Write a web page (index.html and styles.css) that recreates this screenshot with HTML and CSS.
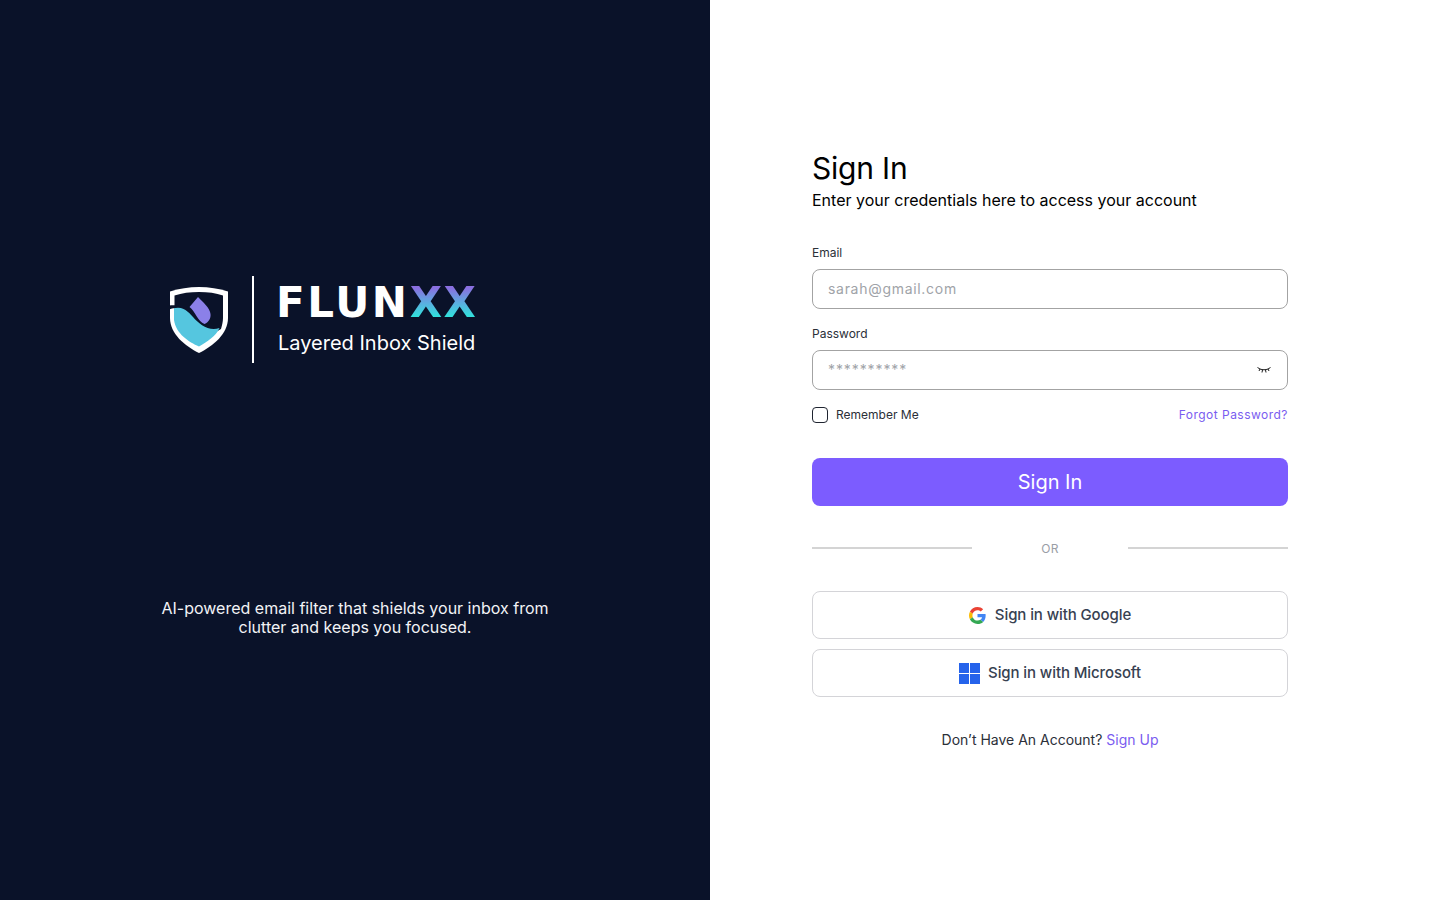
FILE: index.html
```html
<!DOCTYPE html>
<html lang="en">
<head>
    <meta charset="UTF-8">
    <title>Flunxx - Sign In</title>
    <link rel="stylesheet" href="styles.css">
</head>
<body>
    <div class="page">
        <section class="brand-panel">
            <div class="brand">
                <svg class="shield" viewBox="0 0 60 68" width="60" height="68">
                    <path d="M30 1 C40 1 50 2.500 59 5.500 V32 C59 48 44 60 30 67 C16 60 1 48 1 32 V5.500 C10 2.500 20 1 30 1 Z" fill="#fff"/>
                    <path d="M30 6 C39 6 47 7 54 9.500 V32 C54 36 53 39 52 43 L30 56 L5.500 32 V9.500 C13 7 21 6 30 6 Z" fill="#0a1229"/>
                    <path d="M5 22 C12 20 18 24 24 31 C30 38 40 46 50.500 42 C47 50 38 56 30 60.500 C20 56 7 48 5 34 Z" fill="#55c6df"/>
                    <path d="M0 19.500 C4 19 8 19 12 20.500 L12 21.500 C8 21.500 4 22 0 23.500 Z" fill="#0a1229"/>
                    <path d="M29 11 L20.500 21 C26 25 29 36 35.500 38 C40 36 42 32 41.500 28 C41 22 34 16 29 11 Z" fill="#8b80e8"/>
                </svg>
                <span class="brand-rule"></span>
                <div class="brand-text">
                    <div class="wordmark">FLUN<span class="wordmark-x">XX</span></div>
                    <div class="brand-sub">Layered Inbox Shield</div>
                </div>
            </div>
            <p class="tagline">AI-powered email filter that shields your inbox from clutter and keeps you focused.</p>
        </section>

        <main class="form-panel">
            <form class="signin">
                <h1>Sign In</h1>
                <p class="intro">Enter your credentials here to access your account</p>

                <label class="field-label" for="email">Email</label>
                <input class="text-input" id="email" type="email" placeholder="sarah@gmail.com">

                <label class="field-label second" for="password">Password</label>
                <div class="password-wrap">
                    <input class="text-input password" id="password" type="text" placeholder="**********">
                    <svg class="eye" viewBox="0 0 14 7" width="14" height="7" fill="none" stroke="#1c1c1c" stroke-width="1">
                        <path d="M0.500 0.500 L3 2 C5.500 3 8.500 3 11 2 L13.500 0.500"/>
                        <path d="M3 2 L2 4 M5.500 2.800 L5 5.500 M8.500 2.800 L9 5.500 M11 2 L12 4"/>
                    </svg>
                </div>

                <div class="options">
                    <label class="remember"><span class="checkbox"></span>Remember Me</label>
                    <a class="forgot" href="#">Forgot Password?</a>
                </div>

                <button class="submit" type="button">Sign In</button>

                <div class="divider"><span></span><em>OR</em><span></span></div>

                <button class="social google" type="button">
                    <svg viewBox="0 0 48 48" width="17" height="17">
                        <path fill="#EA4335" d="M24 9.500c3.500 0 6.700 1.300 9.100 3.500l6.800-6.800C35.800 2.400 30.200 0 24 0 14.600 0 6.500 5.400 2.600 13.200l7.900 6.100C12.400 13.600 17.700 9.500 24 9.500z"/>
                        <path fill="#4285F4" d="M47 24.500c0-1.600-.1-3.100-.4-4.500H24v9h12.900c-.6 3-2.200 5.400-4.700 7.100l7.700 6c4.500-4.200 7.100-10.300 7.100-17.600z"/>
                        <path fill="#FBBC05" d="M10.500 28.700c-.5-1.500-.8-3-.8-4.700s.3-3.200.8-4.700l-7.900-6.100C.9 16.500 0 20.100 0 24s.9 7.500 2.600 10.800l7.900-6.100z"/>
                        <path fill="#34A853" d="M24 48c6.500 0 11.900-2.100 15.900-5.900l-7.700-6c-2.100 1.400-4.900 2.300-8.200 2.300-6.300 0-11.600-4.100-13.500-9.700l-7.900 6.100C6.500 42.600 14.600 48 24 48z"/>
                    </svg>
                    Sign in with Google
                </button>
                <button class="social microsoft" type="button">
                    <svg viewBox="0 0 21 21" width="21" height="21" fill="#2563eb">
                        <rect x="0" y="0" width="10" height="10"/>
                        <rect x="11" y="0" width="10" height="10"/>
                        <rect x="0" y="11" width="10" height="10"/>
                        <rect x="11" y="11" width="10" height="10"/>
                    </svg>
                    Sign in with Microsoft
                </button>

                <p class="signup">Don’t Have An Account? <a href="#">Sign Up</a></p>
            </form>
        </main>
    </div>
</body>
</html>
```

FILE: styles.css
```css
* {
    box-sizing: border-box;
}

body {
    margin: 0;
    font-family: Inter, "Liberation Sans", sans-serif;
    background: #fff;
    color: #000;
}

.page {
    display: flex;
    height: 900px;
    overflow: hidden;
}

/* Left panel */
.brand-panel {
    width: 710px;
    background: #0a1229;
    color: #fff;
    padding-top: 276px;
    display: flex;
    flex-direction: column;
}

.brand {
    display: flex;
    align-items: center;
    margin-left: 169px;
    height: 87px;
}

.brand-rule {
    width: 2px;
    height: 87px;
    background: #fff;
    margin-left: 23px;
}

.brand-text {
    margin-left: 22px;
    margin-top: -3px;
}

.wordmark {
    font-family: "DejaVu Sans", Inter, sans-serif;
    font-size: 42px;
    line-height: 44px;
    font-weight: 700;
    letter-spacing: 2.6px;
    color: #fff;
    white-space: nowrap;
}

.wordmark-x {
    letter-spacing: 1.5px;
    background: linear-gradient(180deg, #8a6fe0 20%, #5ab0e0 52%, #2fe3dc 80%);
    -webkit-background-clip: text;
    background-clip: text;
    color: transparent;
}

.brand-sub {
    font-size: 20px;
    line-height: 24px;
    margin-top: 6px;
    margin-left: 2px;
}

.tagline {
    width: 400px;
    margin: 236px auto 0;
    text-align: center;
    font-size: 16px;
    line-height: 19px;
    color: #f2f3f6;
}

/* Right panel */
.form-panel {
    flex: 1;
    padding: 150px 152px 0 102px;
}

.signin {
    display: flex;
    flex-direction: column;
}

h1 {
    margin: 0 0 2px;
    font-size: 30px;
    line-height: 36px;
    font-weight: 400;
    letter-spacing: -0.2px;
}

.intro {
    margin: 0;
    font-size: 16px;
    line-height: 24px;
    margin-bottom: 33px;
}

.field-label {
    font-size: 12px;
    line-height: 16px;
    color: #2b2f38;
    margin-bottom: 8px;
}

.field-label.second {
    margin-top: 17px;
}

.text-input {
    width: 100%;
    height: 40px;
    padding: 0 15px 1px;
    border: 1px solid #a3a3a3;
    border-radius: 8px;
    font-family: Inter, "Liberation Sans", sans-serif;
    font-size: 14px;
    letter-spacing: 0.7px;
    outline: none;
}

.text-input.password {
    letter-spacing: 0.9px;
    padding-bottom: 2px;
}

.text-input::placeholder {
    color: #a0a3a8;
    opacity: 1;
}

.password-wrap {
    position: relative;
}

.eye {
    position: absolute;
    top: 17px;
    right: 17px;
}

.options {
    display: flex;
    justify-content: space-between;
    align-items: center;
    margin-top: 17px;
    font-size: 12px;
    line-height: 16px;
}

.remember {
    display: flex;
    align-items: center;
    gap: 8px;
    color: #2b2f38;
}

.checkbox {
    width: 16px;
    height: 16px;
    border: 1px solid #1f2430;
    border-radius: 4px;
}

.forgot {
    color: #7a5cf0;
    text-decoration: none;
    letter-spacing: 0.48px;
}

.submit {
    height: 48px;
    margin-top: 35px;
    border: none;
    border-radius: 8px;
    background: #7c5cff;
    color: #fff;
    font-family: inherit;
    font-size: 20px;
}

.divider {
    display: flex;
    align-items: center;
    justify-content: space-between;
    margin-top: 34px;
    height: 16px;
}

.divider span {
    width: 160px;
    height: 2px;
    background: #d4d4d4;
}

.divider em {
    font-style: normal;
    font-size: 12px;
    color: #9a9ea6;
    letter-spacing: 0.3px;
}

.social {
    display: flex;
    align-items: center;
    justify-content: center;
    height: 48px;
    padding-bottom: 2px;
    background: #fff;
    border: 1px solid #d4d4d8;
    border-radius: 8px;
    font-family: inherit;
    font-size: 15px;
    font-weight: 500;
    letter-spacing: -0.1px;
    color: #374151;
}

.social svg {
    position: relative;
    top: 1px;
}

.google {
    margin-top: 35px;
    gap: 9px;
}

.microsoft {
    margin-top: 10px;
    gap: 8px;
}

.signup {
    margin: 34px 0 0;
    text-align: center;
    font-size: 14px;
    line-height: 18px;
    color: #2b2f38;
}

.signup a {
    color: #7a5cf0;
    text-decoration: none;
}
```
